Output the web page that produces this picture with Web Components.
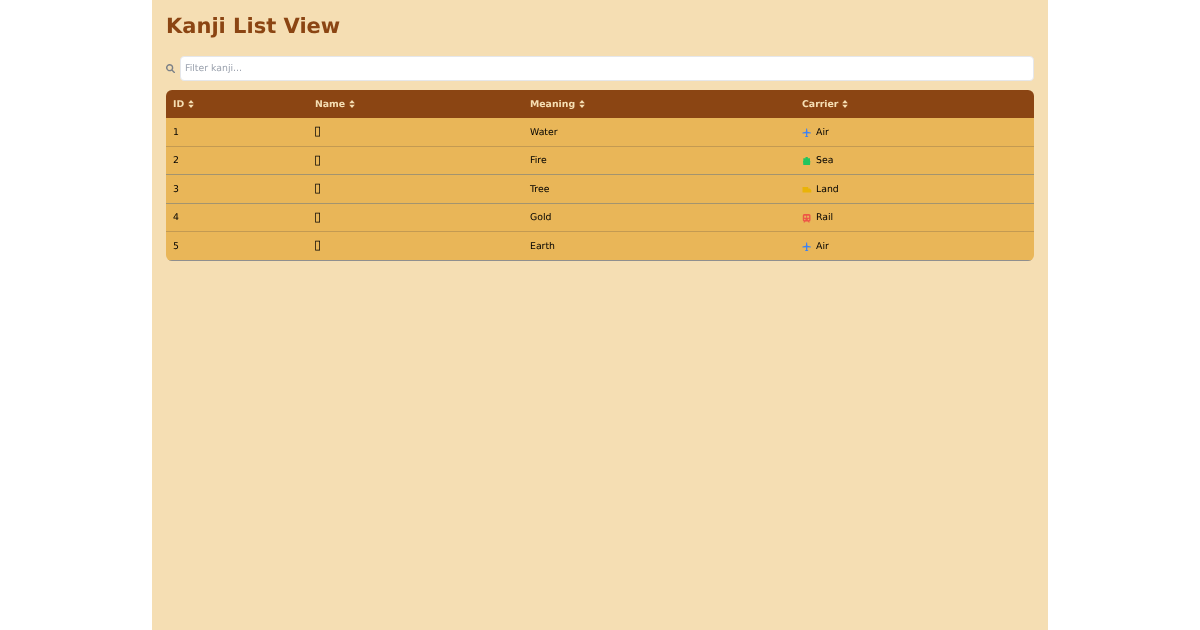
<!DOCTYPE html>
<html lang="en">
<head>
<meta charset="utf-8">
<title>Kanji List View</title>
<style>
  html, body { margin: 0; background: #fff; font-family: "DejaVu Sans", sans-serif; text-rendering: geometricPrecision; }
</style>
</head>
<body>
<kanji-app heading="Kanji List View">
  <kanji-filter placeholder="Filter kanji..."></kanji-filter>
  <kanji-table>
    <kanji-row header>
      <sort-head>ID</sort-head><sort-head>Name</sort-head><sort-head>Meaning</sort-head><sort-head>Carrier</sort-head>
    </kanji-row>
    <kanji-row line="#c39a52"><span>1</span><kanji-glyph title="水">▯</kanji-glyph><span>Water</span><kanji-carrier kind="air">Air</kanji-carrier></kanji-row>
    <kanji-row line="#a3946f"><span>2</span><kanji-glyph title="火">▯</kanji-glyph><span>Fire</span><kanji-carrier kind="sea">Sea</kanji-carrier></kanji-row>
    <kanji-row line="#a3946f"><span>3</span><kanji-glyph title="木">▯</kanji-glyph><span>Tree</span><kanji-carrier kind="land">Land</kanji-carrier></kanji-row>
    <kanji-row line="#c39a52"><span>4</span><kanji-glyph title="金">▯</kanji-glyph><span>Gold</span><kanji-carrier kind="rail">Rail</kanji-carrier></kanji-row>
    <kanji-row line="#8f8f8f"><span>5</span><kanji-glyph title="土">▯</kanji-glyph><span>Earth</span><kanji-carrier kind="air">Air</kanji-carrier></kanji-row>
  </kanji-table>
</kanji-app>

<script>
customElements.define('kanji-app', class extends HTMLElement {
  constructor() {
    super()
    this.attachShadow({mode: 'open'})
    this.shadowRoot.innerHTML = `
      <style>
        :host {
          display: block;
          box-sizing: border-box;
          width: 896px;
          height: 630px;
          margin: 0 auto;
          padding: 14px;
          background: #f5deb3;
          will-change: transform; /* greyscale text, as in the reference */
        }
        h1 {
          margin: 0 0 17px;
          font-size: 21px;
          line-height: 25px;
          font-weight: bold;
          color: #8b4513;
        }
      </style>
      <h1></h1>
      <slot></slot>
    `
    this.shadowRoot.querySelector('h1').textContent = this.getAttribute('heading')
  }
})

customElements.define('kanji-filter', class extends HTMLElement {
  constructor() {
    super()
    this.attachShadow({mode: 'open'})
    this.shadowRoot.innerHTML = `
      <style>
        :host { display: flex; align-items: center; gap: 5px; margin-bottom: 9px; }
        svg { width: 9px; height: 9px; flex: none; fill: #7b8087; }
        input {
          flex: 1;
          box-sizing: border-box;
          height: 25px;
          padding: 0 4px;
          border: 1px solid #e5e7eb;
          border-radius: 4px;
          background: #fff;
          font: 9.33px "DejaVu Sans", sans-serif;
          text-rendering: geometricPrecision;
          outline: none;
        }
        input::placeholder { color: #9ca3af; opacity: 1; }
      </style>
      <svg viewBox="0 0 512 512"><path fill-rule="evenodd" d="M416 208c0 46-15 88-40 122l127 127a38 38 0 0 1-54 54L322 384a208 208 0 1 1 94-176zM208 336a128 128 0 1 0 0-256 128 128 0 0 0 0 256z"/></svg>
      <input type="text">
    `
    this.shadowRoot.querySelector('input').placeholder = this.getAttribute('placeholder')
  }
})

customElements.define('kanji-table', class extends HTMLElement {
  constructor() {
    super()
    this.attachShadow({mode: 'open'})
    this.shadowRoot.innerHTML = `
      <style>
        :host {
          display: block;
          border-radius: 6px;
          overflow: hidden;
          font-size: 9.33px;
          --cols: 142px 215px 272px 1fr;
        }
      </style>
      <slot></slot>
    `
  }
})

customElements.define('kanji-row', class extends HTMLElement {
  constructor() {
    super()
    this.attachShadow({mode: 'open'})
    this.shadowRoot.innerHTML = `
      <style>
        :host {
          display: grid;
          grid-template-columns: var(--cols);
          align-items: center;
          box-sizing: border-box;
          height: 28.5px;
          padding: 1px 0 0 7px;
          background: #e9b658;
          color: #000;
          border-bottom: 1px solid var(--line, #c39a52);
        }
        :host([header]) {
          height: 28px;
          padding-top: 0;
          background: #8b4513;
          color: #f5deb3;
          border-bottom: 0;
        }
      </style>
      <slot></slot>
    `
    if (this.hasAttribute('line')) this.style.setProperty('--line', this.getAttribute('line'))
  }
})

customElements.define('kanji-glyph', class extends HTMLElement {
  constructor() {
    super()
    this.attachShadow({mode: 'open'})
    this.shadowRoot.innerHTML = `
      <style>
        :host { display: block; font-size: 13px; line-height: 12px; margin-left: -1px; }
      </style>
      <slot></slot>
    `
  }
})

customElements.define('sort-head', class extends HTMLElement {
  constructor() {
    super()
    this.attachShadow({mode: 'open'})
    this.shadowRoot.innerHTML = `
      <style>
        :host { display: flex; align-items: center; gap: 3.5px; font-weight: bold; }
        svg { width: 6px; height: 8px; fill: currentColor; }
      </style>
      <slot></slot>
      <svg viewBox="0 0 6 8"><path d="M3 0 5.800 3.200H.2zM3 8 .2 4.800h5.600z"/></svg>
    `
  }
})

const carrierIcons = {
  air: ['#3b82f6', '<path d="M4.200 .5h.9L5.400 3.700 8.800 4.600v.9L5.400 5.200 5.200 7.800 6.300 8.700v.5L4.650 8.900 3 9.200v-.5L4.100 7.800 3.900 5.200.5 5.500v-.9l3.400-.9z"/>'],
  sea: ['#22c55e', '<path d="M3.500 1h2.300v1.200H8V5L4.650 4 1.300 5V2.200h2.200zM1 5 4.650 4l3.650 1L8 9H1.300z"/>'],
  land: ['#eab308', '<path d="M.5 2h5.700v5.500H.5zM6.200 3.500h1.700L9.300 5.300v2.200H6.200z"/>'],
  rail: ['#ef4444', '<path fill-rule="evenodd" opacity=".85" d="M2.300 1h4.700A1.500 1.500 0 0 1 8.500 2.500v4.500A1.500 1.500 0 0 1 7 8.500l.8.900H6.700l-.8-.9H3.400l-.8.900H1.500l.8-.9A1.500 1.500 0 0 1 .8 7V2.500A1.500 1.500 0 0 1 2.300 1zM2.200 2.700v2h2V2.700zM5.100 2.700v2h2V2.700zM2.800 5.800a.7.7 0 1 0 0 1.400.7.7 0 0 0 0-1.400zM6.500 5.800a.7.7 0 1 0 0 1.400.7.7 0 0 0 0-1.400z"/>']
}

customElements.define('kanji-carrier', class extends HTMLElement {
  constructor() {
    super()
    this.attachShadow({mode: 'open'})
    const [color, shape] = carrierIcons[this.getAttribute('kind')]
    this.shadowRoot.innerHTML = `
      <style>
        :host { display: flex; align-items: center; gap: 4.5px; }
        svg { width: 9.5px; height: 9.5px; flex: none; fill: ${color}; }
      </style>
      <svg viewBox="0 0 9.5 9.5">${shape}</svg>
      <slot></slot>
    `
  }
})
</script>
</body>
</html>
